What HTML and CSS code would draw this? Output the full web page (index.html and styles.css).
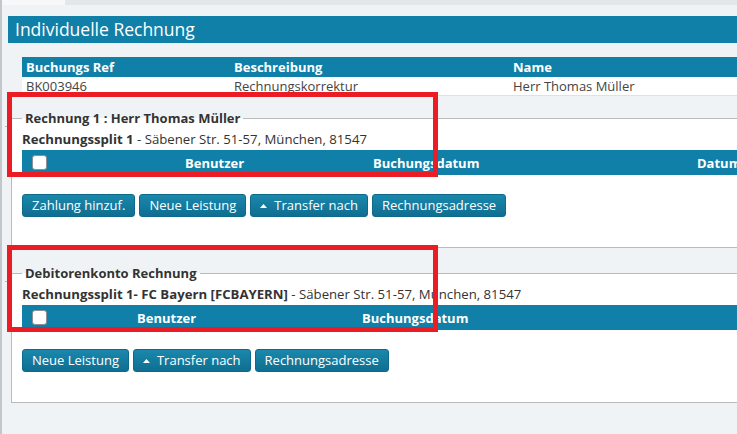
FILE: index.html
```html
<!DOCTYPE html>
<html>
<head>
<meta charset="utf-8">
<link rel="stylesheet" href="styles.css">
</head>
<body>
    <div class="tabstrip"><div class="tab"></div></div>

    <div class="page">
        <div class="title-bar">Individuelle Rechnung</div>

        <table class="summary">
            <thead>
                <tr><th class="c-ref">Buchungs Ref</th><th class="c-desc">Beschreibung</th><th>Name</th></tr>
            </thead>
            <tbody>
                <tr><td>BK003946</td><td>Rechnungskorrektur</td><td>Herr Thomas Müller</td></tr>
            </tbody>
        </table>

        <fieldset class="invoice first">
            <legend>Rechnung 1 : Herr Thomas Müller</legend>
            <div class="split"><b>Rechnungssplit 1</b> - Säbener Str. 51-57, München, 81547</div>
            <table class="lines">
                <tr>
                    <th class="a1"><input type="checkbox" class="chk"></th>
                    <th class="a2">Benutzer</th>
                    <th class="a3">Buchungsdatum</th>
                    <th>Datum</th>
                </tr>
            </table>
            <div class="actions">
                <button class="btn">Zahlung hinzuf.</button>
                <button class="btn">Neue Leistung</button>
                <button class="btn"><svg class="caret" width="7" height="4" viewBox="0 0 7 4"><path d="M0 4 L3.5 0 L7 4 Z" fill="#fff"/></svg>Transfer nach</button>
                <button class="btn">Rechnungsadresse</button>
            </div>
        </fieldset>

        <fieldset class="invoice">
            <legend>Debitorenkonto Rechnung</legend>
            <div class="split"><b>Rechnungssplit 1- FC Bayern [FCBAYERN]</b> - Säbener Str. 51-57, München, 81547</div>
            <table class="lines">
                <tr>
                    <th class="b1"><input type="checkbox" class="chk"></th>
                    <th class="b2">Benutzer</th>
                    <th>Buchungsdatum</th>
                </tr>
            </table>
            <div class="actions">
                <button class="btn">Neue Leistung</button>
                <button class="btn"><svg class="caret" width="7" height="4" viewBox="0 0 7 4"><path d="M0 4 L3.5 0 L7 4 Z" fill="#fff"/></svg>Transfer nach</button>
                <button class="btn">Rechnungsadresse</button>
            </div>
        </fieldset>
    </div>

    <!-- review markers drawn over the screenshot -->
    <div class="mark mark1"></div>
    <div class="mark mark2"></div>
</body>
</html>
```

FILE: styles.css
```css
html, body { overflow: hidden; }
body {
    margin: 0;
    height: 434px;
    background: #eff3f6;
    border-left: 2px solid #c3c7ca;
    font-family: "Open Sans", "Noto Sans", sans-serif;
    font-size: 13px;
    color: #333;
    position: relative;
}

.tabstrip { height: 5px; background: #e3e7ea; }
.tabstrip .tab { width: 63px; height: 5px; background: #f6f8fa; }

.page { width: 860px; padding: 11px 0 0 6px; }

.title-bar {
    height: 27px;
    line-height: 26px;
    background: #1080a8;
    color: #fff;
    font-size: 17.5px;
    padding-left: 7px;
}

/* summary table */
.summary { border-collapse: collapse; margin: 14px 0 0 14px; width: 846px; }
.summary th {
    background: #1080a8; color: #fff; text-align: left;
    height: 20px; padding: 0 4px; font-weight: bold;
}
.summary td {
    background: #fff; height: 17px; padding: 0 4px;
    border-bottom: 1px solid #dde2e6; color: #444;
}
.summary .c-ref { width: 200px; }
.summary .c-desc { width: 271px; }

/* invoice boxes */
.invoice {
    margin: 13px 0 0 3px;
    padding: 0 0 30px 10px;
    border: 1px solid #bbb;
    background: #fff;
    position: relative;
    width: 830px;
}
.invoice::before {
    content: ""; position: absolute;
    left: -7px; top: -1px; width: 7px; height: 1px; background: #bbb;
}
.invoice + .invoice { margin-top: 16px; }
.invoice legend {
    font-weight: bold; padding: 0 3px;
    line-height: 18px;
}

.split { margin-top: 3px; line-height: 18px; font-size: 13.2px; }
.split b { font-weight: bold; }

.lines { border-collapse: collapse; width: 100%; margin-top: 2px; }
.lines th {
    background: #1080a8; color: #fff; text-align: left;
    height: 25px; padding: 0; font-weight: bold;
}
.lines .a1 { width: 163px; }
.lines .a2 { width: 188px; }
.lines .a3 { width: 324px; }
.lines .b1 { width: 115px; }
.lines .b2 { width: 225px; }

.chk {
    appearance: none; -webkit-appearance: none;
    width: 15px; height: 15px; margin: 0 0 0 10px;
    background: #fff; border: 1px solid #8a9096; border-radius: 3px;
    display: block;
}

.actions { margin-top: 19px; display: flex; gap: 4px; }
.btn {
    font-family: inherit; font-size: 13px;
    height: 23px; padding: 0 9px;
    color: #fff; border: 1px solid #0e6a8b; border-radius: 3px;
    background: linear-gradient(#1a88ac, #0f6e91);
    display: flex; align-items: center; line-height: 1;
}
.caret { margin-right: 7px; }

/* red annotation boxes */
.mark {
    position: absolute; left: 5px; width: 431px;
    border: 5px solid #ec1c24; box-sizing: border-box;
}
.mark1 { top: 92px; height: 85px; }
.mark2 { top: 245px; height: 87px; }
```
